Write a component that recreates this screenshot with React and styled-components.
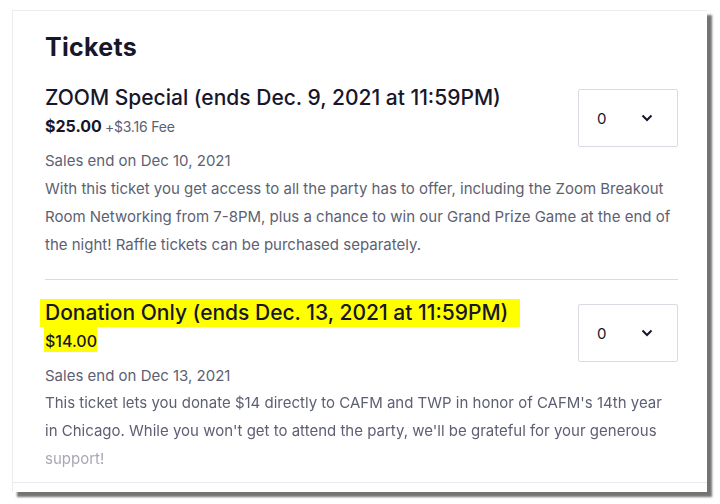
import React from 'react';
import styled, { createGlobalStyle } from 'styled-components';

const GlobalStyle = createGlobalStyle`
  body {
    margin: 0;
    background: #ffffff;
    font-family: Inter, "Open Sans", sans-serif;
  }
`;

const colors = {
  ink: '#17162b',
  muted: '#5d5f73',
  line: '#dbdae3',
  mark: '#ffff00'
};

const Page = styled.div`
  padding: 10px 13px 0 12px;
  width: 720px;
  height: 504px;
  box-sizing: border-box;
`;

const Card = styled.section`
  width: 695px;
  height: 482px;
  box-sizing: border-box;
  background: #fff;
  border-top: 1px solid #ececec;
  border-left: 1px solid #ececec;
  box-shadow: 5px 5px 2px rgba(40, 40, 40, 0.65);
  display: flex;
  flex-direction: column;
`;

const Body = styled.div`
  flex: 1;
  padding: 20px 29px 0 32px;
  border-bottom: 1px solid #e8e8ee;
  overflow: hidden;
`;

const Footer = styled.div`
  height: 9px;
  flex-shrink: 0;
`;

const Heading = styled.h2`
  margin: 0 0 21px;
  font-size: 25px;
  line-height: 32px;
  font-weight: 700;
  color: ${colors.ink};
  letter-spacing: 0.3px;
`;

const Ticket = styled.div`
  padding-bottom: 20px;
  border-bottom: ${(p) => (p.last ? 'none' : `1px solid ${colors.line}`)};
  margin-bottom: 19px;
`;

const TicketHead = styled.div`
  display: flex;
  justify-content: space-between;
  align-items: flex-start;
`;

const Title = styled.h3`
  margin: 0;
  font-size: 21px;
  line-height: 28px;
  font-weight: 500;
  color: ${colors.ink};
`;

const Mark = styled.span`
  display: inline-block;
  background: ${(p) => (p.on ? colors.mark : 'transparent')};
  padding: ${(p) => (p.on ? '0 12px 0 5px' : '0')};
  margin-left: ${(p) => (p.on ? '-5px' : '0')};
`;

const Price = styled.div`
  margin-top: 4px;
  font-size: 16px;
  line-height: 20px;
  font-weight: ${(p) => (p.bold ? 700 : 500)};
  color: ${colors.ink};
`;

const PriceMark = styled.span`
  background: ${(p) => (p.on ? colors.mark : 'transparent')};
  padding: ${(p) => (p.on ? '4px 0 1px 1px' : '0')};
  margin-left: ${(p) => (p.on ? '-1px' : '0')};
`;

const Fee = styled.span`
  font-size: 14px;
  font-weight: 400;
  color: ${colors.muted};
  margin-left: 3px;
  letter-spacing: -0.2px;
`;

const Select = styled.div`
  margin-top: 5px;
  width: 100px;
  height: 58px;
  box-sizing: border-box;
  border: 1px solid ${colors.line};
  border-radius: 2px;
  display: flex;
  align-items: center;
  justify-content: space-between;
  padding: 0 24px 0 18px;
  font-size: 15px;
  color: ${colors.ink};
  flex-shrink: 0;
`;

const SalesEnd = styled.div`
  margin-top: 2px;
  font-size: 15px;
  line-height: 24px;
  color: ${colors.muted};
`;

const Description = styled.p`
  margin: ${(p) => (p.fade ? '1px' : '2px')} 0 0;
  font-size: 15px;
  line-height: 28px;
  color: ${colors.muted};
  ${(p) =>
    p.fade &&
    `-webkit-mask-image: linear-gradient(to bottom, #000 66%, rgba(0,0,0,0.55) 72%);
     mask-image: linear-gradient(to bottom, #000 66%, rgba(0,0,0,0.55) 72%);`}
`;

const Chevron = () => (
  <svg width="12" height="8" viewBox="0 0 12 8" fill="none">
    <path d="M1.5 1.5 L6 6 L10.5 1.5" stroke={colors.ink} strokeWidth="2" />
  </svg>
);

const tickets = [
  {
    title: 'ZOOM Special (ends Dec. 9, 2021 at 11:59PM)',
    price: '$25.00',
    fee: '+$3.16 Fee',
    salesEnd: 'Sales end on Dec 10, 2021',
    description:
      'With this ticket you get access to all the party has to offer, including the Zoom Breakout Room Networking from 7-8PM, plus a chance to win our Grand Prize Game at the end of the night! Raffle tickets can be purchased separately.'
  },
  {
    title: 'Donation Only (ends Dec. 13, 2021 at 11:59PM)',
    price: '$14.00',
    highlight: true,
    salesEnd: 'Sales end on Dec 13, 2021',
    description:
      "This ticket lets you donate $14 directly to CAFM and TWP in honor of CAFM's 14th year in Chicago. While you won't get to attend the party, we'll be grateful for your generous support!"
  }
];

const App = () => (
  <Page>
    <GlobalStyle />
    <Card>
      <Body>
        <Heading>Tickets</Heading>
        {tickets.map((t, i) => (
          <Ticket key={t.title} last={i === tickets.length - 1}>
            <TicketHead>
              <div>
                <Title>
                  <Mark on={t.highlight}>{t.title}</Mark>
                </Title>
                <Price bold={!t.highlight}>
                  <PriceMark on={t.highlight}>{t.price}</PriceMark>
                  {t.fee && <Fee>{t.fee}</Fee>}
                </Price>
              </div>
              <Select>
                <span>0</span>
                <Chevron />
              </Select>
            </TicketHead>
            <SalesEnd>{t.salesEnd}</SalesEnd>
            <Description fade={t.highlight}>{t.description}</Description>
          </Ticket>
        ))}
      </Body>
      <Footer />
    </Card>
  </Page>
);

export default App;
